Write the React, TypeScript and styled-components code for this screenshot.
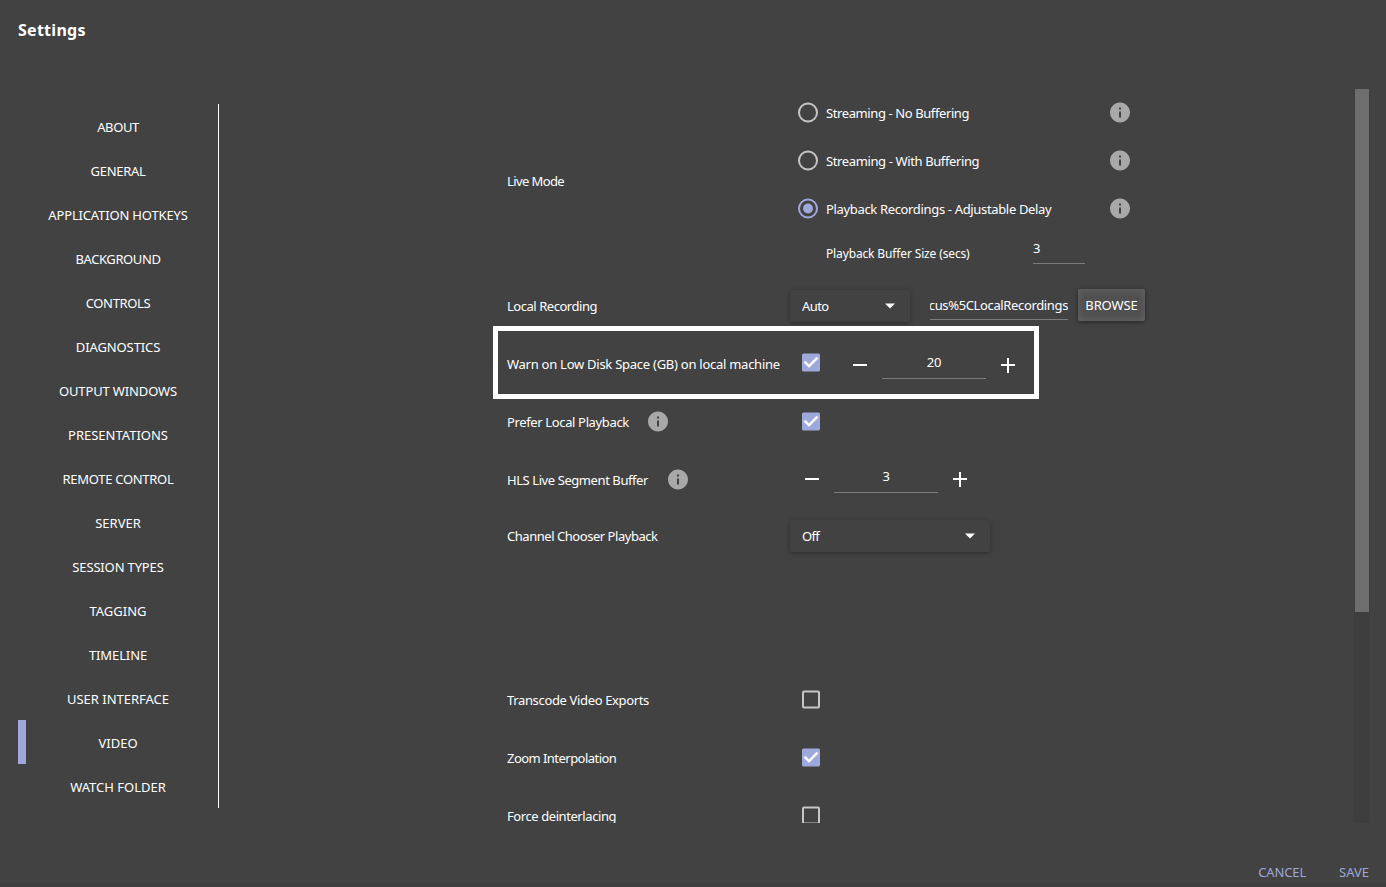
import React from "react";
import styled, { createGlobalStyle } from "styled-components";

const accent = "#9fa8da";

const GlobalStyle = createGlobalStyle`
  *, *::before, *::after { box-sizing: border-box; }
  body {
    margin: 0;
    background: #424242;
    color: #fff;
    font-family: "Noto Sans", sans-serif;
    font-size: 13px;
    overflow: hidden;
  }
`;

const Page = styled.div`
  display: flex;
  flex-direction: column;
  width: 1386px;
  height: 887px;
  background: #424242;
  border-bottom: 4px solid #403f40;
`;

const Header = styled.header`
  height: 89px;
  padding: 18px 18px 0;
`;

const Title = styled.h1`
  margin: 0;
  font-size: 16px;
  line-height: 24px;
  font-weight: 700;
  letter-spacing: 0.27px;
`;

const Body = styled.div`
  display: flex;
  height: 734px;
  padding: 0 16px 0 18px;
`;

const Sidebar = styled.nav`
  display: flex;
  flex-direction: column;
  width: 201px;
  height: 704px;
  margin-top: 15px;
  border-right: 1px solid #fff;
`;

const NavItem = styled.a<{ $active?: boolean; $ls?: number }>`
  display: flex;
  align-items: center;
  justify-content: center;
  height: 44px;
  padding: 1px 8px 0 0;
  border-left: 8px solid ${(p) => (p.$active ? accent : "transparent")};
  letter-spacing: ${(p) => p.$ls ?? 0}px;
  white-space: nowrap;
`;

const Content = styled.main`
  flex: 1;
  height: 734px;
  padding-left: 288px;
  overflow: hidden;
`;

const Track = styled.div`
  width: 16px;
  padding: 0 1px;
  background: #3e3e3e;
`;

const Thumb = styled.div`
  height: 523px;
  background: #6e6e6e;
`;

const Row = styled.div<{ $h?: number; $gap?: number }>`
  position: relative;
  display: grid;
  grid-template-columns: 283px 1fr;
  align-items: center;
  height: ${(p) => p.$h ?? 58}px;
  margin-bottom: ${(p) => p.$gap ?? 0}px;
`;

const Label = styled.div<{ $gap?: number }>`
  display: flex;
  align-items: center;
  gap: ${(p) => p.$gap ?? 18}px;
`;

const Text = styled.span<{ $ls?: number }>`
  letter-spacing: ${(p) => p.$ls ?? 0}px;
  line-height: 18px;
  white-space: nowrap;
`;

const Controls = styled.div<{ $lift?: number }>`
  display: flex;
  align-items: center;
  padding-bottom: ${(p) => p.$lift ?? 0}px;
`;

const Highlight = styled.div`
  position: absolute;
  left: -14px;
  top: -9px;
  width: 546px;
  height: 73px;
  border: 5px solid #fff;
  pointer-events: none;
`;

const RadioList = styled.div`
  display: flex;
  flex-direction: column;
`;

const RadioRow = styled.div`
  display: flex;
  align-items: center;
  height: 48px;
  padding-left: 6px;
`;

const RadioText = styled.div`
  width: 288px;
  padding-left: 6px;
`;

const BufferRow = styled.div`
  display: flex;
  align-items: flex-start;
  height: 40px;
  padding: 0 0 0 36px;
`;

const BufferLabel = styled.div`
  width: 207px;
  padding-top: 12px;
  font-size: 12px;
`;

const Field = styled.div<{ $w: number; $h?: number; $center?: boolean }>`
  display: flex;
  justify-content: ${(p) => (p.$center ? "center" : "flex-start")};
  width: ${(p) => p.$w}px;
  height: ${(p) => p.$h ?? 32}px;
  padding-top: 6px;
  border-bottom: 1px solid #7c7c7c;
  overflow: hidden;
`;

const PathField = styled(Field)`
  justify-content: flex-end;
  height: 30px;
  margin: 0 10px 2px 20px;
`;

const Select = styled.div<{ $w: number }>`
  display: flex;
  align-items: center;
  justify-content: space-between;
  width: ${(p) => p.$w}px;
  height: 32px;
  padding: 0 8px 0 12px;
  border-radius: 2px;
  background: #424242;
  box-shadow: 0 1px 4px rgba(0, 0, 0, 0.35);
`;

const Browse = styled.button`
  width: 67px;
  height: 32px;
  margin-bottom: 2px;
  padding: 0;
  border: 0;
  border-radius: 2px;
  background: #505050;
  box-shadow: 0 1px 4px rgba(0, 0, 0, 0.45), inset 0 0 8px rgba(255, 255, 255, 0.14);
  color: #fff;
  font: inherit;
`;

const Stepper = styled.div<{ $left: number; $shift: number }>`
  display: flex;
  align-items: flex-start;
  height: 32px;
  padding-left: ${(p) => p.$left}px;
  margin-top: ${(p) => p.$shift}px;
`;

const StepButton = styled.span`
  display: flex;
  padding: 6px 10px 0;
`;

const CheckSlot = styled.span`
  display: flex;
  padding-left: 9px;
`;

const Footer = styled.footer`
  display: flex;
  justify-content: flex-end;
  gap: 33px;
  padding: 40px 17px 0 0;
  color: ${accent};
`;

const Icon = styled.svg`
  display: block;
  flex: none;
  width: 24px;
  height: 24px;
`;

const InfoIcon = () => (
  <Icon viewBox="0 0.5 24 24" fill="#a8a8a8">
    <path d="M12 2C6.48 2 2 6.48 2 12s4.48 10 10 10 10-4.48 10-10S17.52 2 12 2zm1 15h-2v-6h2v6zm0-8h-2V7h2v2z" />
  </Icon>
);

const RadioIcon = ({ checked }: { checked?: boolean }) => (
  <Icon viewBox="0 0.5 24 24" fill="none" stroke={checked ? accent : "#c6c6c6"} strokeWidth="2">
    <circle cx="12" cy="12" r="9" />
    {checked && <circle cx="12" cy="12" r="5" fill={accent} stroke="none" />}
  </Icon>
);

const Checkbox = ({ checked }: { checked?: boolean }) => (
  <CheckSlot>
    {checked ? (
      <Icon viewBox="0 0.5 24 24">
        <rect x="3" y="3" width="18" height="18" rx="1.5" fill={accent} />
        <path d="M10 17l-5-5 1.41-1.41L10 14.17l7.59-7.59L19 8l-9 9z" fill="#fff" stroke="#fff" strokeWidth="0.6" />
      </Icon>
    ) : (
      <Icon viewBox="0 0.5 24 24">
        <rect x="4" y="4" width="16" height="16" rx="1" fill="none" stroke="#c6c6c6" strokeWidth="2" />
      </Icon>
    )}
  </CheckSlot>
);

const Caret = () => (
  <Icon viewBox="0 0.5 24 24" fill="#fff">
    <path d="M7 10l5 5 5-5z" />
  </Icon>
);

const NumberStepper = ({ value, left, shift }: { value: string; left: number; shift: number }) => (
  <Stepper $left={left} $shift={shift}>
    <StepButton>
      <Icon viewBox="0 0 24 24" fill="#fff"><path d="M19 13H5v-2h14z" /></Icon>
    </StepButton>
    <Field $w={104} $center><Text $ls={-0.2}>{value}</Text></Field>
    <StepButton>
      <Icon viewBox="0 0 24 24" fill="#fff"><path d="M19 13h-6v7h-2v-7H5v-2h6V5h2v6h6z" /></Icon>
    </StepButton>
  </Stepper>
);

const nav: { name: string; ls?: number; active?: boolean }[] = [
  { name: "ABOUT", ls: -0.4 },
  { name: "GENERAL", ls: -0.3 },
  { name: "APPLICATION HOTKEYS", ls: -0.16 },
  { name: "BACKGROUND", ls: -0.4 },
  { name: "CONTROLS", ls: -0.35 },
  { name: "DIAGNOSTICS", ls: -0.1 },
  { name: "OUTPUT WINDOWS", ls: -0.14 },
  { name: "PRESENTATIONS" },
  { name: "REMOTE CONTROL", ls: -0.28 },
  { name: "SERVER" },
  { name: "SESSION TYPES", ls: -0.15 },
  { name: "TAGGING" },
  { name: "TIMELINE", ls: -0.1 },
  { name: "USER INTERFACE" },
  { name: "VIDEO", active: true },
  { name: "WATCH FOLDER" },
];

const modes: { name: string; ls?: number; checked?: boolean }[] = [
  { name: "Streaming - No Buffering", ls: -0.4 },
  { name: "Streaming - With Buffering", ls: -0.38 },
  { name: "Playback Recordings - Adjustable Delay", ls: -0.34, checked: true },
];

export default function App() {
  return (
    <>
      <GlobalStyle />
      <Page>
        <Header><Title>Settings</Title></Header>
        <Body>
          <Sidebar>
            {nav.map((n) => (
              <NavItem key={n.name} $active={n.active} $ls={n.ls}>{n.name}</NavItem>
            ))}
          </Sidebar>
          <Content>
            <Row $h={184} $gap={4}>
              <Label><Text $ls={-0.6}>Live Mode</Text></Label>
              <RadioList>
                {modes.map((m) => (
                  <RadioRow key={m.name}>
                    <RadioIcon checked={m.checked} />
                    <RadioText><Text $ls={m.ls}>{m.name}</Text></RadioText>
                    <InfoIcon />
                  </RadioRow>
                ))}
                <BufferRow>
                  <BufferLabel><Text $ls={-0.14}>Playback Buffer Size (secs)</Text></BufferLabel>
                  <Field $w={52} $h={31}><Text>3</Text></Field>
                </BufferRow>
              </RadioList>
            </Row>
            <Row>
              <Label><Text $ls={-0.46}>Local Recording</Text></Label>
              <Controls>
                <Select $w={120}><Text $ls={-0.6}>Auto</Text><Caret /></Select>
                <PathField $w={138}><Text $ls={-0.36}>cus%5CLocalRecordings</Text></PathField>
                <Browse><Text $ls={-0.1}>BROWSE</Text></Browse>
              </Controls>
            </Row>
            <Row>
              <Label><Text $ls={-0.26}>Warn on Low Disk Space (GB) on local machine</Text></Label>
              <Controls $lift={2}>
                <Checkbox checked />
                <NumberStepper value="20" left={15} shift={0} />
              </Controls>
              <Highlight />
            </Row>
            <Row>
              <Label $gap={17}><Text $ls={-0.36}>Prefer Local Playback</Text><InfoIcon /></Label>
              <Controls><Checkbox checked /></Controls>
            </Row>
            <Row>
              <Label><Text $ls={-0.42}>HLS Live Segment Buffer</Text><InfoIcon /></Label>
              <Controls><NumberStepper value="3" left={0} shift={-6} /></Controls>
            </Row>
            <Row $h={54} $gap={108}>
              <Label><Text $ls={-0.46}>Channel Chooser Playback</Text></Label>
              <Controls><Select $w={200}><Text $ls={-0.7}>Off</Text><Caret /></Select></Controls>
            </Row>
            <Row>
              <Label><Text $ls={-0.35}>Transcode Video Exports</Text></Label>
              <Controls><Checkbox /></Controls>
            </Row>
            <Row>
              <Label><Text $ls={-0.54}>Zoom Interpolation</Text></Label>
              <Controls><Checkbox checked /></Controls>
            </Row>
            <Row>
              <Label><Text $ls={-0.42}>Force deinterlacing</Text></Label>
              <Controls><Checkbox /></Controls>
            </Row>
          </Content>
          <Track><Thumb /></Track>
        </Body>
        <Footer>
          <Text $ls={-0.15}>CANCEL</Text>
          <Text>SAVE</Text>
        </Footer>
      </Page>
    </>
  );
}
